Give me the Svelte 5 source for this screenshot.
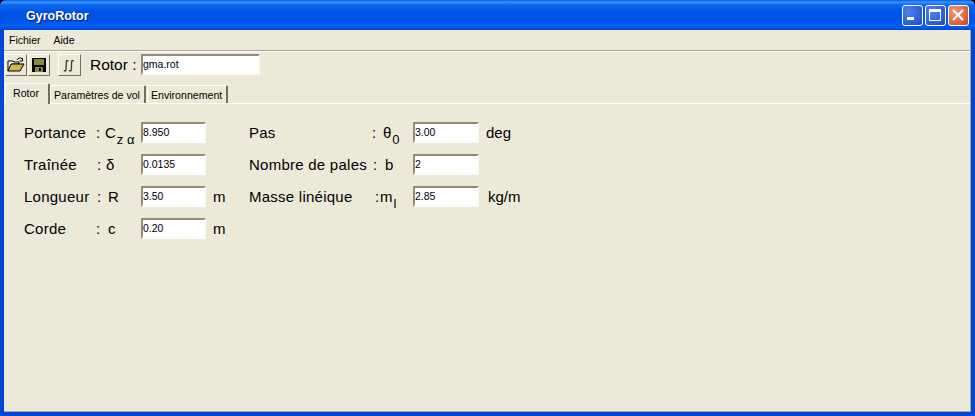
<script>
  const left = [
    { label: 'Portance', colon: 0, sym: 'C', sub: 'z α', val: '8.950', unit: '' },
    { label: 'Traînée', colon: 1, sym: 'δ', nudge: 1, sub: '', val: '0.0135', unit: '' },
    { label: 'Longueur', colon: 1, sym: 'R', nudge: 3, sub: '', val: '3.50', unit: 'm' },
    { label: 'Corde', colon: 0, sym: 'c', nudge: 3, sub: '', val: '0.20', unit: 'm' }
  ];
  const right = [
    { label: 'Pas', colon: 0, sym: 'θ', nudge: 2, sub: '0', val: '3.00', unit: 'deg', unitNudge: 1 },
    { label: 'Nombre de pales', colon: 1, sym: 'b', nudge: 4, sub: '', val: '2', unit: '' },
    { label: 'Masse linéique', colon: 3, sym: 'm', nudge: -1, sub: 'l', val: '2.85', unit: 'kg/m', unitNudge: 3 }
  ];
  const rows = left.map((l, i) => ({ l, r: right[i] }));
</script>

<div class="window">
  <header class="title">
    <span class="title-text">GyroRotor</span>
    <div class="controls">
      <button class="ctl" aria-label="Réduire"><svg width="21" height="21" viewBox="0 0 21 21"><rect x="5" y="12" width="7" height="3" fill="#fff"/></svg></button>
      <button class="ctl" aria-label="Agrandir"><svg width="21" height="21" viewBox="0 0 21 21"><path d="M4.500 5.500h11v10h-11z" fill="none" stroke="#fff"/><rect x="4" y="4" width="12" height="3" fill="#fff"/></svg></button>
      <button class="ctl close" aria-label="Fermer"><svg width="21" height="21" viewBox="0 0 21 21"><path d="M5 5l10 10M15 5l-10 10" stroke="#fff" stroke-width="2.200"/></svg></button>
    </div>
  </header>

  <div class="body">
    <nav class="menu"><span>Fichier</span><span>Aide</span></nav>

    <div class="toolbar">
      <button class="tool" aria-label="Ouvrir">
        <svg width="18" height="16" viewBox="0 0 18 16">
          <path d="M1 4h5l1 1h5v2H5L1 14z" fill="#fff" stroke="#000" stroke-width="1"/>
          <path d="M1 14l3-7h13l-4 7z" fill="#c9b84a" stroke="#000" stroke-width="1"/>
          <path d="M10 3c1-2 3-2.500 5-1.500M15.500 1v3h-3" fill="none" stroke="#000"/>
        </svg>
      </button>
      <button class="tool" aria-label="Enregistrer">
        <svg width="16" height="16" viewBox="0 0 16 16">
          <rect x="1" y="1" width="14" height="14" fill="#000"/>
          <rect x="3" y="2" width="10" height="6" fill="#8a8a3a"/>
          <rect x="4" y="10" width="8" height="5" fill="#8a8a3a"/>
          <rect x="8" y="11" width="2" height="3" fill="#000"/>
        </svg>
      </button>
      <button class="tool wide">∫∫</button>
      <span class="rotor-label">Rotor :</span>
      <input class="field rotor" value="gma.rot" readonly />
    </div>

    <div class="tabs">
      <span class="tab active">Rotor</span>
      <span class="tab">Paramètres de vol</span>
      <span class="tab">Environnement</span>
    </div>

    <main class="panel">
      <div class="form">
        {#each rows as { l, r }}
          <span class="lab">{l.label}</span>
          <span class="colon" style:margin-left="{l.colon}px">:</span>
          <span class="sym" style:margin-left="{l.nudge ?? 0}px">{l.sym}{#if l.sub}<sub>{l.sub}</sub>{/if}</span>
          <input class="field" value={l.val} readonly />
          <span class="unit">{l.unit}</span>
          {#if r}
            <span class="lab">{r.label}</span>
            <span class="colon" style:margin-left="{r.colon}px">:</span>
            <span class="sym" style:margin-left="{r.nudge ?? 0}px">{r.sym}{#if r.sub}<sub>{r.sub}</sub>{/if}</span>
            <input class="field wide-field" value={r.val} readonly />
            <span class="unit" style:margin-left="{6 + (r.unitNudge ?? 0)}px">{r.unit}</span>
          {/if}
        {/each}
      </div>
    </main>
  </div>
</div>

<style>
  :global(body) {
    margin: 0;
    overflow: hidden;
    background: #000;
  }
  .window {
    width: 975px;
    height: 416px;
    display: flex;
    flex-direction: column;
    box-sizing: border-box;
    border-radius: 6px 6px 0 0;
    overflow: hidden;
    font-family: "Liberation Sans", Arial, sans-serif;
    color: #000;
    background: #0046d5;
  }
  .title {
    height: 30px;
    flex: none;
    display: flex;
    align-items: center;
    justify-content: space-between;
    padding: 1px 6px 0 26px;
    box-sizing: border-box;
    background: linear-gradient(180deg, #0058ee 0, #3d95ff 2px, #0a66f0 5px, #0054e3 12px, #0055ea 22px, #0060f5 26px, #0046d5 30px);
  }
  .title-text {
    color: #fff;
    font-weight: 700;
    font-size: 12.500px;
    text-shadow: 1px 1px 1px #0a1f7a;
  }
  .controls {
    display: flex;
    gap: 2px;
    margin-bottom: 1px;
  }
  .ctl {
    width: 21px;
    height: 21px;
    padding: 0;
    border: 1px solid #fff;
    border-radius: 3px;
    box-sizing: border-box;
    background: radial-gradient(circle at 30% 30%, #4f83ee, #2a5bd8 70%, #1c46c0);
    display: flex;
    align-items: center;
    justify-content: center;
  }
  .ctl svg { flex: none; }
  .close {
    background: radial-gradient(circle at 30% 30%, #f0997c, #e0613a 65%, #c23a1c);
  }
  .body {
    flex: 1;
    display: flex;
    flex-direction: column;
    margin: 0 4px 4px;
    background: #ece9d8;
    min-height: 0;
    border-bottom: 1px solid #aca899;
    border-right: 1px solid #aca899;
  }
  .menu {
    height: 20px;
    flex: none;
    display: flex;
    align-items: center;
    gap: 13px;
    padding-left: 5px;
    font-size: 10.500px;
    border-bottom: 1px solid #aca899;
    box-shadow: 0 1px 0 #fff;
  }
  .toolbar {
    height: 27px;
    flex: none;
    display: flex;
    align-items: center;
    padding-left: 1px;
  }
  .tool {
    width: 22px;
    height: 22px;
    padding: 0;
    margin-right: 1px;
    box-sizing: border-box;
    background: #ece9d8;
    border: 1px solid;
    border-color: #fff #716f64 #716f64 #fff;
    display: flex;
    align-items: center;
    justify-content: center;
    font-family: "DejaVu Sans", sans-serif;
    font-size: 12px;
    letter-spacing: -1px;
    color: #000;
  }
  .tool.wide {
    width: 23px;
    margin-left: 7px;
    padding-right: 3px;
  }
  .rotor-label {
    font-size: 15.500px;
    margin-left: 8px;
    width: 51px;
  }
  .field {
    box-sizing: border-box;
    width: 65px;
    height: 21px;
    padding: 0 0 2px 0;
    background: #fff;
    color: #000;
    font-family: "Liberation Sans", Arial, sans-serif;
    font-size: 10.500px;
    border: 2px solid;
    border-color: #8f8c7d #fbfaf4 #fbfaf4 #8f8c7d;
    outline: none;
  }
  .rotor {
    width: 119px;
  }
  .wide-field {
    width: 66px;
  }
  .tabs {
    flex: none;
    height: 23px;
    margin-top: 2px;
    padding-left: 1px;
    display: flex;
    align-items: flex-end;
    font-size: 10.600px;
  }
  .tab {
    height: 17px;
    padding: 0 4px 0 3px;
    margin-right: 1px;
    line-height: 18px;
    border-left: 1px solid #fff;
    border-top: 1px solid #fff;
    border-right: 2px solid #716f64;
    border-radius: 2px 2px 0 0;
    white-space: nowrap;
  }
  .tab.active {
    height: 20px;
    width: 31px;
    padding: 0 4px 0 7px;
    margin-right: 0;
    line-height: 19px;
    position: relative;
    z-index: 1;
    background: #ece9d8;
    margin-bottom: -1px;
  }
  .panel {
    flex: 1;
    min-height: 0;
    border-top: 1px solid #fff;
    padding: 18px 0 0 20px;
  }
  .form {
    display: grid;
    grid-template-columns: 72px 9px 36px 65px 43px 123px 9px 32px 66px auto;
    grid-auto-rows: 21px;
    row-gap: 11px;
    font-size: 15px;
    align-items: center;
    justify-content: start;
  }
  .lab { white-space: nowrap; letter-spacing: 0.250px; }
  .colon { white-space: pre; }
  .sym { white-space: nowrap; }
  sub {
    font-size: 13px;
    line-height: 0;
    vertical-align: -6px;
    margin-left: 1px;
  }
  .unit {
    margin-left: 7px;
  }
</style>
